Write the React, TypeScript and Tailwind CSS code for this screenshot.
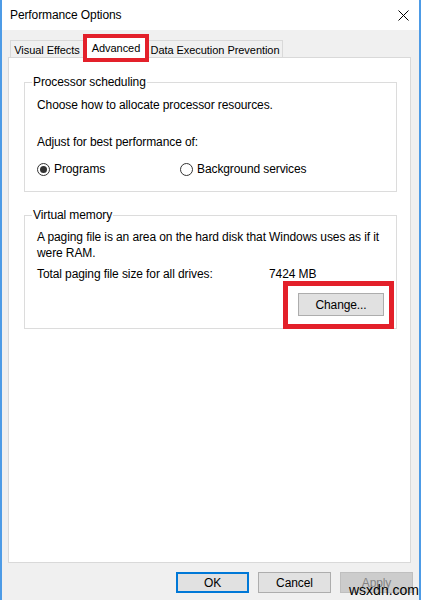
import { useState } from 'react';

type Priority = 'programs' | 'background';

function Radio({ checked, label, onSelect, className = '' }: { checked: boolean; label: string; onSelect: () => void; className?: string }) {
  return (
    <label className={`flex items-center gap-[4px] cursor-default ${className}`} onClick={onSelect}>
      <span className="flex h-[13px] w-[13px] items-center justify-center rounded-full border border-[#333333] bg-white">
        {checked && <span className="h-[7px] w-[7px] rounded-full bg-[#333333]" />}
      </span>
      <span>{label}</span>
    </label>
  );
}

function Button({ children, variant = 'normal', className = '' }: { children: React.ReactNode; variant?: 'normal' | 'default' | 'disabled'; className?: string }) {
  const look =
    variant === 'default'
      ? 'border-2 border-[#0078d7] bg-[#e1e1e1] text-black'
      : variant === 'disabled'
        ? 'border border-[#bfbfbf] bg-[#cccccc] text-[#838383]'
        : 'border border-[#adadad] bg-[#e1e1e1] text-black';
  return (
    <button className={`flex h-[21px] w-[73px] items-center justify-center ${look} ${className}`}>{children}</button>
  );
}

export default function App() {
  const [priority, setPriority] = useState<Priority>('programs');

  return (
    <div className="relative h-[600px] w-[421px] overflow-hidden border-x-2 border-[#4d9be6] bg-[#f0f0f0] font-['Liberation_Sans',Arial,sans-serif] text-[12px] leading-[16px] tracking-[-0.1px] text-black">
      {/* title bar */}
      <div className="flex h-[30px] items-center justify-between bg-white pl-[8px] pr-[10px]">
        <span>Performance Options</span>
        <svg width="11" height="11" viewBox="0 0 11 11" className="mt-[1px]">
          <path d="M0.5 0.5 L10.5 10.5 M10.5 0.5 L0.5 10.5" stroke="#000" strokeWidth="1" />
        </svg>
      </div>

      {/* tabs */}
      <div className="relative z-10 mt-[6px] -mb-px ml-[8px] flex h-[22px] items-end whitespace-nowrap text-[11px] tracking-[-0.05px]">
        <div className="flex h-[18px] w-[74px] items-center justify-center border border-b-0 border-[#d9d9d9]">Visual Effects</div>
        <div className="relative flex h-[22px] w-[64px] items-center justify-center border border-b-0 border-[#d9d9d9] bg-white">
          Advanced
          <span className="absolute top-[-3px] right-[-2px] bottom-[-4px] left-[-2px] border-4 border-[#e3202a]" />
        </div>
        <div className="flex h-[18px] w-[135px] items-center justify-center border border-b-0 border-l-0 border-[#d9d9d9]">Data Execution Prevention</div>
      </div>

      {/* tab panel */}
      <div className="ml-[6px] h-[506px] w-[403px] border border-[#d9d9d9] bg-white pt-[16px] pr-[13px] pl-[15px]">
        <fieldset className="border border-[#dcdcdc] px-[12px] pb-[14px]">
          <legend className="-ml-[5px] px-[1px]">Processor scheduling</legend>
          <p className="mt-[7px]">Choose how to allocate processor resources.</p>
          <p className="mt-[21px]">Adjust for best performance of:</p>
          <div className="mt-[11px] flex">
            <Radio className="w-[143px]" checked={priority === 'programs'} label="Programs" onSelect={() => setPriority('programs')} />
            <Radio checked={priority === 'background'} label="Background services" onSelect={() => setPriority('background')} />
          </div>
        </fieldset>

        <fieldset className="mt-[15px] border border-[#dcdcdc] px-[12px] pb-[12px]">
          <legend className="-ml-[5px] px-[1px]">Virtual memory</legend>
          <p className="mt-[6px] whitespace-nowrap">
            A paging file is an area on the hard disk that Windows uses as if it
            <br />
            were RAM.
          </p>
          <div className="mt-[5px] flex">
            <span className="w-[232px]">Total paging file size for all drives:</span>
            <span>7424 MB</span>
          </div>
          <div className="mt-[11px] flex justify-end">
            <div className="relative">
              <button className="flex h-[23px] w-[86px] items-center justify-center border border-[#adadad] bg-[#e1e1e1]">Change...</button>
              <span className="absolute top-[-12px] right-[-10px] bottom-[-13px] left-[-15px] border-[5px] border-[#e3202a]" />
            </div>
          </div>
        </fieldset>
      </div>

      {/* dialog buttons */}
      <div className="mt-[9px] mr-[6px] flex justify-end gap-[9px]">
        <Button variant="default">OK</Button>
        <Button>Cancel</Button>
        <Button variant="disabled" className="w-[72px]">Apply</Button>
      </div>

      <span className="absolute top-[582px] left-[347px] text-[14px] leading-[16px] tracking-normal text-black">wsxdn.com</span>
    </div>
  );
}
